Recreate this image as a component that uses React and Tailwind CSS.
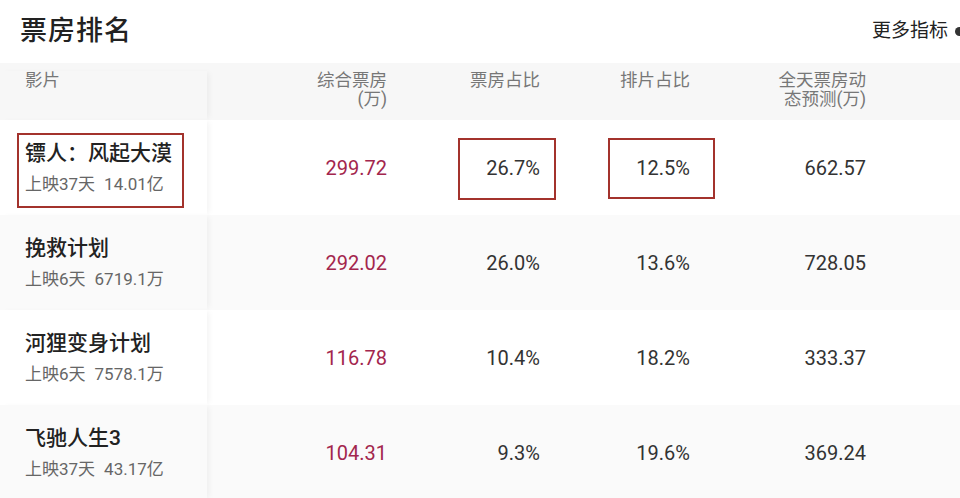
const films = [
  { name: '镖人：风起大漠', days: '上映37天', total: '14.01亿', box: '299.72', share: '26.7%', screen: '12.5%', forecast: '662.57', marked: true },
  { name: '挽救计划', days: '上映6天', total: '6719.1万', box: '292.02', share: '26.0%', screen: '13.6%', forecast: '728.05' },
  { name: '河狸变身计划', days: '上映6天', total: '7578.1万', box: '116.78', share: '10.4%', screen: '18.2%', forecast: '333.37' },
  { name: '飞驰人生3', days: '上映37天', total: '43.17亿', box: '104.31', share: '9.3%', screen: '19.6%', forecast: '369.24' },
];

function FilmRow({ film, index }) {
  const bg = index % 2 === 1 ? 'bg-[#fafafa]' : 'bg-white';
  return (
    <div className={`relative flex h-[95px] items-center ${bg}`}>
      <div className="relative flex h-full w-[207px] shrink-0 flex-col justify-center pl-[25px] shadow-[4px_0_6px_-2px_rgba(0,0,0,0.05)]">
        <div className="text-[21px] font-medium leading-[27px] text-[#222]">{film.name}</div>
        <div className="mt-[6px] text-[17px] leading-[22px] text-[#666]">
          {film.days}
          <span className="ml-[9px]">{film.total}</span>
        </div>
        {film.marked && (
          <div className="absolute left-[17px] top-[13px] h-[75px] w-[167px] border-[2.5px] border-[#a3322c]" />
        )}
      </div>
      <div className="w-[180px] shrink-0 text-right text-[20px] text-[#a3264d]">{film.box}</div>
      <div className="w-[153px] shrink-0 text-right text-[20px] text-[#333]">{film.share}</div>
      <div className="w-[150px] shrink-0 text-right text-[20px] text-[#333]">{film.screen}</div>
      <div className="w-[176px] shrink-0 text-right text-[20px] text-[#333]">{film.forecast}</div>
      {film.marked && (
        <>
          <div className="absolute left-[458px] top-[18px] h-[62px] w-[98px] border-[2.5px] border-[#a3322c]" />
          <div className="absolute left-[608px] top-[18px] h-[61px] w-[107px] border-[2.5px] border-[#a3322c]" />
        </>
      )}
    </div>
  );
}

export default function App() {
  return (
    <div className="h-[498px] w-[960px] overflow-hidden bg-white font-['Roboto','Noto_Sans_CJK_SC',sans-serif]">
      <div className="flex h-[63px] items-center justify-between pl-[20px]">
        <h1 className="text-[27px] font-medium tracking-[1px] text-[#222]">票房排名</h1>
        <div className="-mr-[5px] flex items-center gap-[7px] text-[19px] text-[#222]">
          更多指标
          <span className="h-[9px] w-[10px] rounded-full bg-[#333]" />
        </div>
      </div>

      <div className="flex h-[57px] bg-[#f7f7f7] pt-[8px] text-[17.5px] leading-[19px] text-[#777]">
        <div className="w-[207px] shrink-0 pl-[25px] shadow-[4px_0_6px_-2px_rgba(0,0,0,0.05)]">影片</div>
        <div className="w-[180px] shrink-0 text-right">
          综合票房
          <br />
          (万)
        </div>
        <div className="w-[153px] shrink-0 text-right">票房占比</div>
        <div className="w-[150px] shrink-0 text-right">排片占比</div>
        <div className="w-[176px] shrink-0 text-right">
          全天票房动
          <br />
          态预测(万)
        </div>
      </div>

      {films.map((film, i) => (
        <FilmRow key={film.name} film={film} index={i} />
      ))}
    </div>
  );
}
